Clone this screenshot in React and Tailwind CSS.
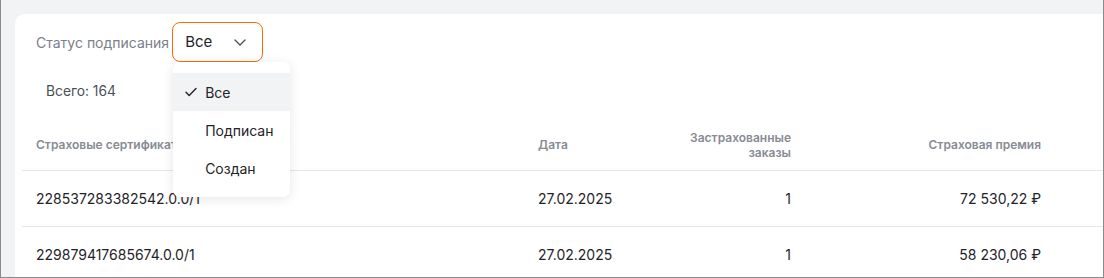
import { useState } from "react";

const ROWS = [
  { id: "228537283382542.0.0/1", date: "27.02.2025", orders: 1, premium: "72 530,22 ₽" },
  { id: "229879417685674.0.0/1", date: "27.02.2025", orders: 1, premium: "58 230,06 ₽" },
];

const OPTIONS = ["Все", "Подписан", "Создан"];

const Check = () => (
  <svg width="12" height="10" viewBox="0 0 12 10" fill="none" className="shrink-0">
    <path d="M1 5.2 4.2 8.4 11 1.4" stroke="#1f2329" strokeWidth="1.4" strokeLinecap="round" strokeLinejoin="round" />
  </svg>
);

const Chevron = () => (
  <svg width="12" height="7" viewBox="0 0 12 7" fill="none">
    <path d="M1 1l5 5 5-5" stroke="#4b5058" strokeWidth="1.4" strokeLinecap="round" strokeLinejoin="round" />
  </svg>
);

const App = () => {
  const [status, setStatus] = useState("Все");
  const [open, setOpen] = useState(true);

  return (
    <div
      className="w-[1104px] h-[278px] overflow-hidden bg-[#f2f3f5] border-l border-r border-b border-[#8a8a8a] pl-[14px] pt-[14px]"
      style={{ fontFamily: "Inter, 'Noto Sans', sans-serif" }}
    >
      <div className="bg-white rounded-tl-[10px] h-full px-[7px] pt-[8px]">
        {/* Фильтр */}
        <div className="flex items-center pl-[14px] h-[40px]">
          <span className="text-[14px] text-[#7b8089] mr-[3px]">Статус подписания</span>
          <div className="relative">
            <button
              onClick={() => setOpen((o) => !o)}
              className="flex items-center justify-between w-[91px] h-[40px] pl-[12px] pr-[16px] border border-[#ff6a00] rounded-[8px] bg-white text-[15px] text-[#1f2329]"
            >
              {status}
              <Chevron />
            </button>
            {open && (
              <div className="absolute left-[1px] top-[40px] w-[117px] bg-white rounded-[7px] shadow-[0_2px_12px_rgba(0,0,0,0.10)] pt-[11px] pb-[10px] z-10">
                {OPTIONS.map((o) => (
                  <div
                    key={o}
                    onClick={() => { setStatus(o); setOpen(false); }}
                    className={`flex items-center h-[38px] pl-[12px] gap-[8px] text-[14px] text-[#1f2329] cursor-pointer ${o === status ? "bg-[#f2f3f5]" : ""}`}
                  >
                    <span className="w-[12px] flex">{o === status && <Check />}</span>
                    {o}
                  </div>
                ))}
              </div>
            )}
          </div>
        </div>

        <div className="mt-[19px] pl-[24px] text-[13.8px] leading-[20px] text-[#4b5058]">Всего: 164</div>

        {/* Таблица */}
        <table className="mt-[19px] w-[1120px] table-fixed border-collapse">
          <colgroup>
            <col className="w-[502px]" />
            <col className="w-[141px]" />
            <col className="w-[140px]" />
            <col className="w-[250px]" />
            <col />
          </colgroup>
          <thead>
            <tr className="h-[50px] border-b border-[#e6e7ea]">
              <th className="text-left px-[14px] text-[12px] font-semibold text-[#878b94] leading-[15px]">Страховые сертификаты</th>
              <th className="text-left px-[14px] text-[12px] font-semibold text-[#878b94] leading-[15px]">Дата</th>
              <th className="text-right px-[14px] text-[12px] font-semibold text-[#878b94] leading-[15px]">
                Застрахованные
                <br />
                заказы
              </th>
              <th className="text-right px-[14px] text-[12px] font-semibold text-[#878b94] leading-[15px]">Страховая премия</th>
              <th />
            </tr>
          </thead>
          <tbody>
            {ROWS.map((r) => (
              <tr key={r.id} className="h-[56px] border-b border-[#e6e7ea]">
                <td className="px-[14px] text-[14px] text-[#1f2329]">{r.id}</td>
                <td className="px-[14px] text-[14px] text-[#1f2329]">{r.date}</td>
                <td className="px-[14px] text-[14px] text-[#1f2329] text-right">{r.orders}</td>
                <td className="px-[14px] text-[14px] text-[#1f2329] text-right">{r.premium}</td>
                <td />
              </tr>
            ))}
          </tbody>
        </table>
      </div>
    </div>
  );
};

export default App;
